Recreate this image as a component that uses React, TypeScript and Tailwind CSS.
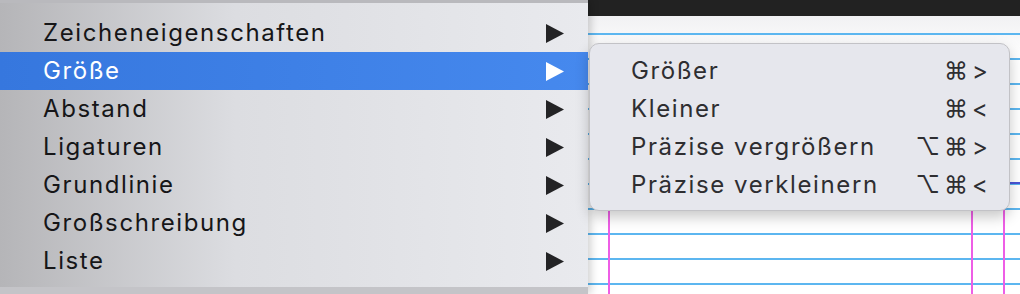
const mainItems = [
  "Zeicheneigenschaften",
  "Größe",
  "Abstand",
  "Ligaturen",
  "Grundlinie",
  "Großschreibung",
  "Liste",
];

const subItems = [
  { label: "Größer", keys: "⌘>" },
  { label: "Kleiner", keys: "⌘<" },
  { label: "Präzise vergrößern", keys: "⌥⌘>" },
  { label: "Präzise verkleinern", keys: "⌥⌘<" },
];

const Arrow = ({ active }: { active: boolean }) => (
  <svg width="18" height="19" viewBox="0 0 18 19">
    <polygon points="0,0 18,9.5 0,19" fill={active ? "#ffffff" : "#232325"} />
  </svg>
);

// ruled page behind the menus
const Page = () => {
  const rows = Array.from({ length: 11 }, (_, i) => 33 + i * 25);
  return (
    <svg width="432" height="278" viewBox="0 0 432 278" className="block">
      <defs>
        <linearGradient id="pg" x1="0" x2="0" y1="0" y2="1">
          <stop offset="0" stopColor="#f1f1f3" />
          <stop offset="0.15" stopColor="#ffffff" />
        </linearGradient>
      </defs>
      <rect width="432" height="278" fill="url(#pg)" />
      {rows.map((y) => (
        <rect key={y} x="0" y={y - 16} width="432" height="2" fill="#5cb6f0" />
      ))}
      <rect x="412" y="166" width="20" height="2" fill="#4b55d6" />
      <rect x="20" y="40" width="2" height="238" fill="#ee5ee6" />
      <rect x="383" y="40" width="2" height="238" fill="#ee5ee6" />
      <rect x="415" y="40" width="2" height="238" fill="#ee5ee6" />
    </svg>
  );
};

export default function App() {
  return (
    <div
      className="relative flex w-[1020px] h-[294px] overflow-hidden bg-white tracking-[1.6px]"
      style={{ fontFamily: "Inter, 'DejaVu Sans', sans-serif" }}
    >
      <div className="relative z-10 flex w-[588px] shrink-0 flex-col bg-gradient-to-r from-[#b5b5b8] via-[#dcdde1] via-40% to-[#e9eaee] shadow-[3px_0_8px_rgba(0,0,0,0.18)]">
        <div className="h-[3px] bg-[#b9b9bd]" />
        <div className="flex flex-1 flex-col pt-[11px]">
          {mainItems.map((item) => {
            const active = item === "Größe";
            return (
              <div
                key={item}
                className={
                  active
                    ? "flex h-[38px] items-center justify-between bg-gradient-to-r from-[#3677de] to-[#4689ee] pl-[43px] pr-[24px] text-white"
                    : "flex h-[38px] items-center justify-between pl-[43px] pr-[24px] text-[#161618]"
                }
              >
                <span className="text-[24px] leading-[38px]">{item}</span>
                <Arrow active={active} />
              </div>
            );
          })}
        </div>
        <div className="h-[7px] bg-[#c4c4c8]" />
      </div>

      <div className="relative flex flex-1 flex-col">
        <div className="h-[16px] bg-[#222222]" />
        <Page />
      </div>

      <div className="absolute left-[589px] top-[43px] z-20 w-[421px] rounded-[10px] border border-[#c2c2c6] bg-[#e6e7ed] pt-[8px] pb-[6px] shadow-[0_6px_14px_rgba(0,0,0,0.22)]">
        {subItems.map((s) => (
          <div
            key={s.label}
            className="flex h-[38px] items-center justify-between pl-[41px] pr-[21px] text-[24px] text-[#2e2e31]"
          >
            <span className="leading-[38px]">{s.label}</span>
            <span className="leading-[38px] tracking-[4px] -mr-[4px]">{s.keys}</span>
          </div>
        ))}
      </div>
    </div>
  );
}
